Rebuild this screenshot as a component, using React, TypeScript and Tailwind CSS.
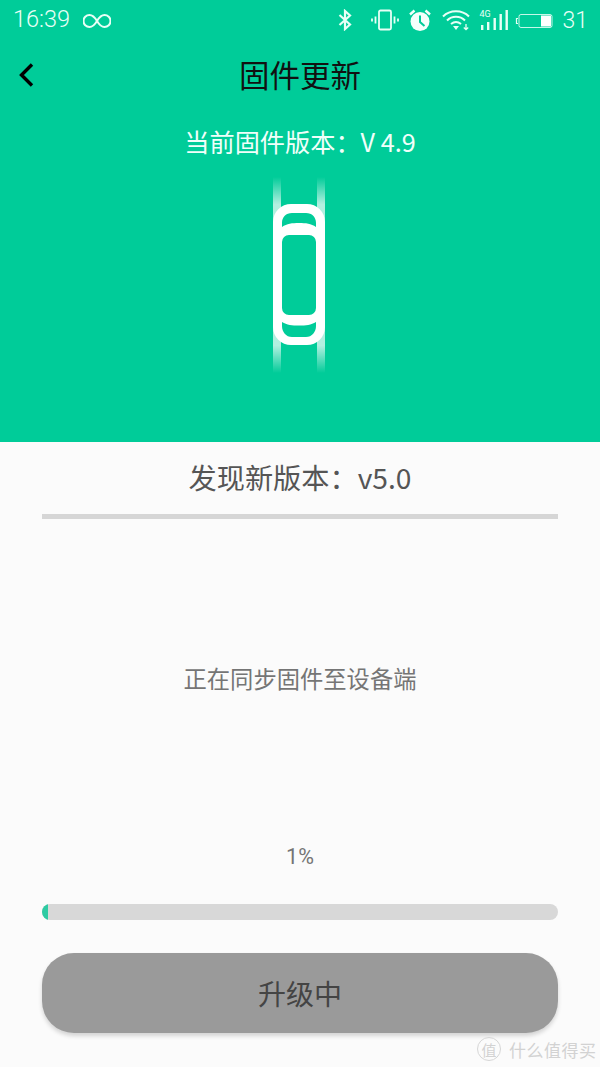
import React from "react";

const cjk = { fontFamily: '"Noto Sans CJK SC", sans-serif' };
const roboto = { fontFamily: "Roboto, sans-serif", fontWeight: 300 };

const StatusIcons = () => (
  <div className="flex items-center text-white">
    <svg width="14" height="22" viewBox="0 0 14 22" fill="none" stroke="#e8fff6" strokeWidth="2.2" className="mr-[19px]">
      <path d="M1.5 6 12 15.5 7 20V2l5 4.5L1.5 16" />
    </svg>
    <svg width="28" height="22" viewBox="0 0 28 22" fill="none" stroke="#e8fff6" className="mr-[9px]">
      <rect x="8" y="1.5" width="12" height="19" rx="1.5" strokeWidth="1.8" />
      <path d="M4.5 7.5v7M1 9.5v3M23.5 7.5v7M27 9.5v3" strokeWidth="1.8" />
    </svg>
    <svg width="24" height="24" viewBox="0 0 24 24" className="mr-[10px]">
      <circle cx="12" cy="13.5" r="9.5" fill="#f4fffb" />
      <path d="M12 7.5v6.5l4.5 4" stroke="#00cc99" strokeWidth="2" fill="none" />
      <path d="M2 6.5 6.5 2.5M22 6.5 17.5 2.5" stroke="#f4fffb" strokeWidth="2.4" />
    </svg>
    <svg width="28" height="24" viewBox="0 0 28 24" fill="none" stroke="#e8fff6" strokeWidth="2" className="mr-[9px]">
      <path d="M1 8.5C8 1.5 20 1.5 27 8.5" />
      <path d="M5 12.5C10 7.5 18 7.5 23 12.5" />
      <path d="M9 16C12 13.5 16 13.5 19 16" />
      <path d="M11 18h6l-3 4z" fill="#e8fff6" stroke="none" />
      <path d="M24 16v5M21.8 19.5l2.2 2.2 2.2-2.2" strokeWidth="1.3" />
    </svg>
    <div className="relative w-[30px] h-[24px] mr-[6px]">
      <span className="absolute left-0 top-[1px] text-[9px] leading-[10px] text-[#e8fff6]" style={{ fontFamily: "Roboto, sans-serif" }}>4G</span>
      <svg width="30" height="24" viewBox="0 0 30 24" fill="#e8fff6">
        <rect x="2" y="17" width="2.4" height="5" />
        <rect x="8" y="14" width="2.4" height="8" />
        <rect x="14.5" y="10" width="2.4" height="12" />
        <rect x="20.5" y="6" width="2.4" height="16" />
        <rect x="26.5" y="2" width="2.4" height="20" />
      </svg>
    </div>
    <svg width="38" height="16" viewBox="0 0 38 16" fill="none" className="mr-[9px] mt-[2px]">
      <path d="M3 5.500H1.500v5H3" stroke="#e8fff6" strokeWidth="1.2" />
      <rect x="4" y="1.500" width="33" height="13" rx="2" stroke="#e8fff6" strokeWidth="1" opacity="0.85" />
      <rect x="26" y="2.500" width="10" height="11" fill="#ffffff" />
    </svg>
    <span className="text-[23px] leading-none text-[#e8fff6] mr-[12px]" style={roboto}>31</span>
  </div>
);

const Band = () => (
  <svg width="60" height="200" viewBox="0 0 60 200" fill="none" className="mt-[19px]">
    <defs>
      <linearGradient id="rail" x1="0" y1="0" x2="0" y2="1">
        <stop offset="0" stopColor="#fff" stopOpacity="0" />
        <stop offset="0.14" stopColor="#fff" stopOpacity="0.7" />
        <stop offset="0.86" stopColor="#fff" stopOpacity="0.7" />
        <stop offset="1" stopColor="#fff" stopOpacity="0" />
      </linearGradient>
    </defs>
    <rect x="3" y="1" width="8" height="196" fill="url(#rail)" />
    <rect x="47" y="1" width="8" height="196" fill="url(#rail)" />
    <path
      fillRule="evenodd"
      fill="#fff"
      d="M21 28H37A18 18 0 0 1 55 46V151A18 18 0 0 1 37 169H21A18 18 0 0 1 3 151V46A18 18 0 0 1 21 28Z
         M22 37H36C42 37 46 41 46 47V51C41 47.500 36 47 29 47C22 47 17 47.500 12 51V47C12 41 16 37 22 37Z
         M19 59H39A7 7 0 0 1 46 66V132A7 7 0 0 1 39 139H19A7 7 0 0 1 12 132V66A7 7 0 0 1 19 59Z
         M12 146C17 149 22 149.500 29 149.500C36 149.500 41 149 46 146V150C46 156 42 161 36 161H22C16 161 12 156 12 150Z"
    />
  </svg>
);

export default function App() {
  return (
    <div className="relative w-[600px] h-[1067px] overflow-hidden bg-[#fbfbfb]" style={cjk}>
      <div className="h-[442px] bg-[#00cc99] flex flex-col">
        <div className="h-[40px] flex items-center justify-between">
          <div className="flex items-center pl-[13px]">
            <span className="text-[23.5px] leading-none text-[#e8fff6]" style={roboto}>16:39</span>
            <svg width="28" height="16" viewBox="0 0 28 16" fill="none" stroke="#e8fff6" strokeWidth="2" className="ml-[13px] mt-[1px]">
              <path d="M14 8C11 3 9 2 6.500 2a6 6 0 0 0 0 12C9 14 11 13 14 8C17 3 19 2 21.500 2a6 6 0 0 1 0 12C19 14 17 13 14 8Z" />
            </svg>
          </div>
          <StatusIcons />
        </div>
        <div className="relative h-[72px] flex items-center justify-center">
          <svg width="16" height="26" viewBox="0 0 16 26" fill="none" stroke="#000" strokeWidth="3.4" className="absolute left-[18px] top-[22px]">
            <path d="M14 2.500 3.500 13 14 23.500" />
          </svg>
          <span className="text-[30.5px] leading-none text-[#111] pb-[3px]">固件更新</span>
        </div>
        <div className="flex flex-col items-center">
          <p className="mt-[13px] text-[25.2px] leading-[32px] text-[#f0fffa]">当前固件版本：V 4.9</p>
          <Band />
        </div>
      </div>

      <div className="flex flex-col items-center px-[42px]">
        <p className="mt-[13px] h-[44px] text-[28.2px] leading-[44px] text-[#555555]">发现新版本：v5.0</p>
        <div className="mt-[15px] w-full h-[5px] bg-[#d6d6d6]" />
        <p className="mt-[143px] text-[23.3px] leading-[32px] text-[#757575]">正在同步固件至设备端</p>
        <p className="mt-[149px] text-[21.5px] leading-[28px] text-[#757575]" style={{ fontFamily: "Roboto, sans-serif" }}>1%</p>
        <div className="mt-[33px] w-full h-[16px] rounded-full bg-[#d8d8d8] overflow-hidden">
          <div className="w-[6px] h-full bg-[#2ecba3]" />
        </div>
        <button className="mt-[33px] w-full h-[80px] rounded-[32px] bg-[#9a9a9a] text-[28px] leading-none text-[#444444] shadow-[0_3px_4px_rgba(0,0,0,0.16)]">
          升级中
        </button>
      </div>

      <div className="absolute left-[477px] top-[1037px] flex items-center gap-[8px] text-[#d2d2d2]">
        <div className="w-[24px] h-[24px] rounded-full border border-[#d6d6d6] flex items-center justify-center text-[15px] leading-none">值</div>
        <span className="text-[17px] leading-none tracking-[0.5px]">什么值得买</span>
      </div>
    </div>
  );
}
